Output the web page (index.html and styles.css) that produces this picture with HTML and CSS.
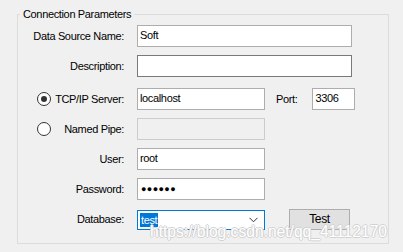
FILE: index.html
```html
<!DOCTYPE html>
<html lang="en">
<head>
	<meta charset="UTF-8">
	<title>Connection Parameters</title>
	<link rel="stylesheet" href="styles.css">
</head>
<body>
	<fieldset class="params">
		<legend>Connection Parameters</legend>

		<div class="row">
			<label class="label">Data Source Name:</label>
			<input class="field field--wide" type="text" value="Soft">
		</div>

		<div class="row">
			<label class="label">Description:</label>
			<input class="field field--wide field--hover" type="text" value="">
		</div>

		<div class="row row--server">
			<label class="label label--radio">
				<span class="radio radio--on"></span>
				<span>TCP/IP Server:</span>
			</label>
			<input class="field" type="text" value="localhost">
			<span class="port-label">Port:</span>
			<input class="field field--port" type="text" value="3306">
		</div>

		<div class="row">
			<label class="label label--radio">
				<span class="radio"></span>
				<span>Named Pipe:</span>
			</label>
			<input class="field" type="text" value="" disabled>
		</div>

		<div class="row">
			<label class="label">User:</label>
			<input class="field" type="text" value="root">
		</div>

		<div class="row">
			<label class="label">Password:</label>
			<div class="field field--dots">&#9679;&#9679;&#9679;&#9679;&#9679;&#9679;</div>
		</div>

		<div class="row">
			<label class="label">Database:</label>
			<div class="combo">
				<span class="combo__value">test</span>
				<svg class="combo__arrow" width="9" height="6" viewBox="0 0 9 6">
					<polyline points="0.5,0.8 4.5,4.8 8.5,0.8" fill="none" stroke="#333" stroke-width="1"/>
				</svg>
			</div>
			<button class="button" type="button">Test</button>
		</div>
	</fieldset>

	<div class="watermark">https://blog.csdn.net/qq_41112170</div>
</body>
</html>
```

FILE: styles.css
```css
body {
	margin: 0;
	width: 403px;
	height: 252px;
	background: #f0f0f0;
	font-family: "Liberation Sans", Arial, sans-serif;
	font-size: 11px;
	letter-spacing: -0.35px;
	color: #000;
	overflow: hidden;
	position: relative;
}
.params {
	box-sizing: border-box;
	width: 372px;
	margin: 6px 0 0 17px;
	padding: 3px 0 13px 0;
	border: 1px solid #dcdcdc;
}
.params legend {
	margin-left: 2px;
	padding: 0 3px;
	line-height: 16px;
}
.row {
	display: flex;
	align-items: center;
	height: 22px;
	margin-top: 8px;
}
.row:first-of-type {
	margin-top: 0;
}
.row--server {
	margin-top: 11px;
}
.label {
	width: 106px;
	margin-right: 13px;
	text-align: right;
	white-space: nowrap;
}
.label--radio {
	display: flex;
	align-items: center;
	justify-content: space-between;
	box-sizing: border-box;
	padding-left: 19px;
}
.radio {
	box-sizing: border-box;
	width: 14px;
	height: 14px;
	border: 1px solid #333;
	border-radius: 50%;
	background: #fff;
	position: relative;
}
.radio--on::after {
	content: "";
	position: absolute;
	left: 3px;
	top: 3px;
	width: 6px;
	height: 6px;
	border-radius: 50%;
	background: #333;
}
.field {
	box-sizing: border-box;
	width: 128px;
	height: 22px;
	margin: 0;
	padding: 0 2px 3px;
	border: 1px solid #adadad;
	background: #fff;
	font: inherit;
	letter-spacing: inherit;
	color: #000;
	outline: none;
}
.field--wide {
	width: 215px;
}
.field--hover {
	border-color: #7a7a7a;
}
.field--port {
	width: 43px;
}
.field:disabled {
	background: #f0f0f0;
	border-color: #cccccc;
}
.field--dots {
	display: flex;
	align-items: center;
	padding: 0 3px 1px;
	font-size: 9px;
	letter-spacing: 0.4px;
}
.port-label {
	margin-left: 11px;
	margin-right: 15px;
}
.combo {
	box-sizing: border-box;
	display: flex;
	align-items: center;
	justify-content: space-between;
	width: 128px;
	height: 20px;
	margin-top: 1px;
	padding: 0 6px 0 2px;
	border: 1px solid #0078d7;
	background: #fff;
}
.combo__value {
	background: #0078d7;
	color: #fff;
	padding: 0 1px;
	line-height: 14px;
}
.button {
	box-sizing: border-box;
	width: 61px;
	height: 21px;
	margin: 0 0 0 24px;
	padding: 0;
	border: 1px solid #adadad;
	background: #e1e1e1;
	font: inherit;
	letter-spacing: inherit;
	font-size: 12px;
	color: #000;
}
.watermark {
	position: absolute;
	left: 150px;
	top: 223px;
	font-family: "Liberation Sans", Arial, sans-serif;
	font-size: 15.6px;
	letter-spacing: 0;
	color: #fff;
	text-shadow: 1px 0 0 #d2d2d2, -1px 0 0 #d2d2d2, 0 1px 0 #d2d2d2, 0 -1px 0 #d2d2d2;
}
```
